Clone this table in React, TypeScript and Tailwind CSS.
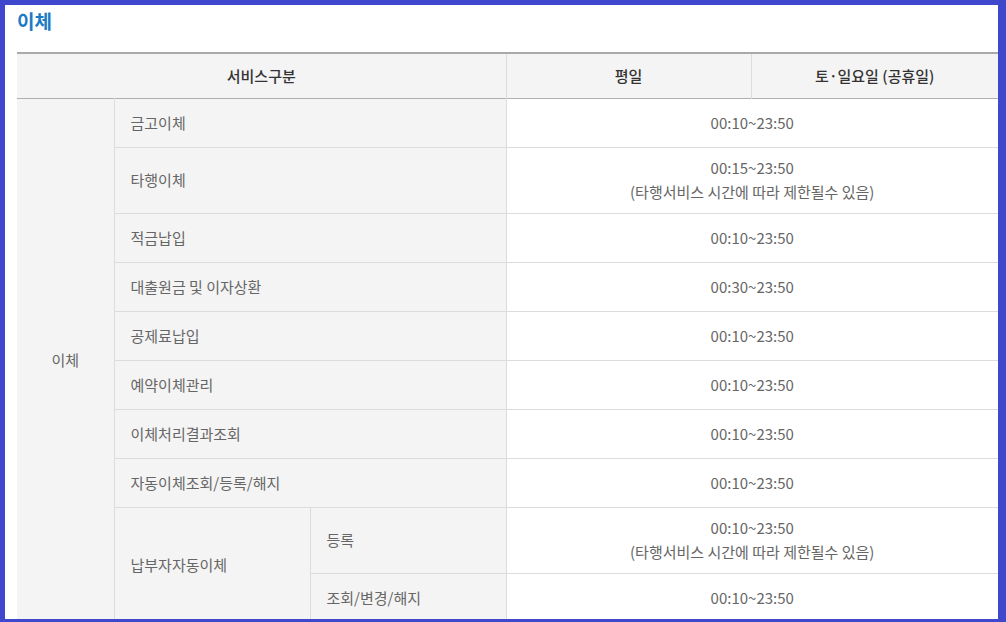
import React from "react";

const font = { fontFamily: '"Noto Sans CJK KR", "Noto Sans", sans-serif' };

type Row = { name: string; time: string; note?: boolean };

const rows: Row[] = [
  { name: "금고이체", time: "00:10~23:50" },
  { name: "타행이체", time: "00:15~23:50", note: true },
  { name: "적금납입", time: "00:10~23:50" },
  { name: "대출원금 및 이자상환", time: "00:30~23:50" },
  { name: "공제료납입", time: "00:10~23:50" },
  { name: "예약이체관리", time: "00:10~23:50" },
  { name: "이체처리결과조회", time: "00:10~23:50" },
  { name: "자동이체조회/등록/해지", time: "00:10~23:50" },
];

function Time({ time, note }: { time: string; note?: boolean }) {
  return (
    <td colSpan={2} className="bg-white text-center border-b border-[#dcdcdc] px-4 leading-6">
      {time}
      {note && (
        <>
          <br />
          (타행서비스 시간에 따라 제한될수 있음)
        </>
      )}
    </td>
  );
}

export default function App() {
  return (
    <div
      className="w-[1006px] h-[622px] bg-[#3f48cc] pl-[5px] pt-[5px] pr-[8px] pb-[3px]"
      style={font}
    >
      <div className="bg-white w-full h-full overflow-hidden pl-[12px] pt-[4px]">
        <h2 className="text-[19px] font-bold leading-6 text-[#1a7ac4] mb-[19px]">이체</h2>
        <table className="w-[981px] border-collapse table-fixed text-[15px] text-[#666]">
          <colgroup>
            <col className="w-[97px]" />
            <col className="w-[196px]" />
            <col className="w-[196px]" />
            <col className="w-[245px]" />
            <col className="w-[247px]" />
          </colgroup>
          <thead>
            <tr className="h-[45px] bg-[#f4f4f4] text-[#333] border-t-2 border-t-[#aaaaaa] border-b border-b-[#b0b0b0]">
              <th colSpan={3} className="font-medium text-center border-r border-[#dcdcdc]">서비스구분</th>
              <th className="font-medium text-center border-r border-[#dcdcdc]">평일</th>
              <th className="font-medium text-center">토·일요일 (공휴일)</th>
            </tr>
          </thead>
          <tbody>
            {rows.map((r, i) => (
              <tr key={r.name} className={r.note ? "h-[66px]" : "h-[49px]"}>
                {i === 0 && (
                  <td rowSpan={10} className="bg-[#f4f4f4] text-center border-r border-[#dcdcdc]">
                    이체
                  </td>
                )}
                <td colSpan={2} className="bg-[#f4f4f4] border-b border-r border-[#dcdcdc] pl-4 leading-6">
                  {r.name}
                </td>
                <Time time={r.time} note={r.note} />
              </tr>
            ))}
            <tr className="h-[66px]">
              <td rowSpan={2} className="bg-[#f4f4f4] border-b border-r border-[#dcdcdc] pl-4 leading-6">
                납부자자동이체
              </td>
              <td className="bg-[#f4f4f4] border-b border-r border-[#dcdcdc] pl-4 leading-6">등록</td>
              <Time time="00:10~23:50" note />
            </tr>
            <tr className="h-[49px]">
              <td className="bg-[#f4f4f4] border-b border-r border-[#dcdcdc] pl-4 leading-6">조회/변경/해지</td>
              <Time time="00:10~23:50" />
            </tr>
          </tbody>
        </table>
      </div>
    </div>
  );
}
